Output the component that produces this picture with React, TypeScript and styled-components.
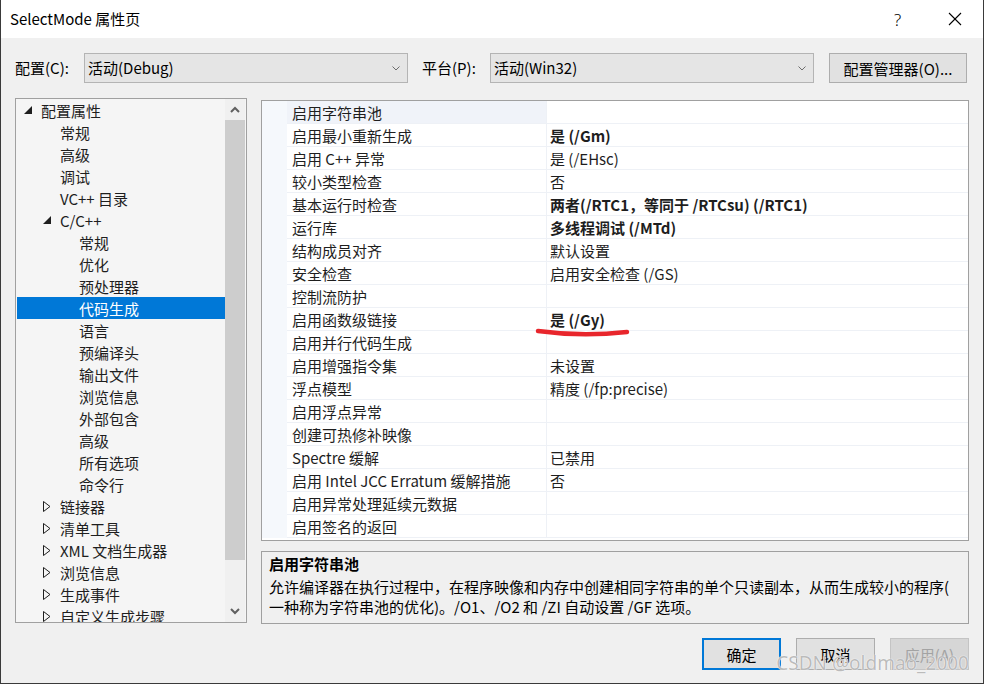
import React from 'react';
import styled, { createGlobalStyle } from 'styled-components';

const FONT = `"Noto Sans CJK SC", "Noto Sans", sans-serif`;

const GlobalStyle = createGlobalStyle`
  html, body { margin: 0; padding: 0; background: #f0f0f0; }
  body { font-family: ${FONT}; font-size: 15px; color: #000; }
  * { box-sizing: border-box; }
`;

const Window = styled.div`
  position: relative;
  width: 984px;
  height: 684px;
  background: #f0f0f0;
  border-left: 1px solid #3a3a3a;
  border-right: 1px solid #3a3a3a;
  border-bottom: 1px solid #3a3a3a;
  display: flex;
  flex-direction: column;
  overflow: hidden;
`;

const TitleBar = styled.div`
  height: 38px;
  flex: none;
  background: #ffffff;
  display: flex;
  align-items: center;
`;

const Title = styled.div`
  padding-left: 9px;
  font-size: 15px;
  line-height: 20px;
  flex: 1;
  color: #000;
`;

const CaptionButton = styled.div`
  width: 57px;
  height: 38px;
  display: flex;
  align-items: center;
  justify-content: center;
  font-family: "Noto Sans", sans-serif;
  font-size: 17px;
  font-weight: 300;
  color: #000;
`;

const Toolbar = styled.div`
  flex: none;
  display: flex;
  align-items: center;
  padding: 15px 0 0 14px;
  height: 45px;
`;

const Label = styled.div<{ $w: number; $ml?: number }>`
  width: ${(p) => p.$w}px;
  margin-left: ${(p) => p.$ml ?? 0}px;
  font-size: 15px;
  line-height: 30px;
  color: #000;
`;

const Combo = styled.div`
  width: 324px;
  height: 30px;
  background: #e5e5e5;
  border: 1px solid #b4b4b4;
  display: flex;
  align-items: center;
  padding: 0 7px 0 3px;
  font-size: 15px;
`;

const ComboText = styled.span`
  flex: 1;
  line-height: 28px;
`;

const PushButton = styled.div<{ $w: number; $h?: number; $ml?: number; $default?: boolean; $disabled?: boolean }>`
  width: ${(p) => p.$w}px;
  height: ${(p) => p.$h ?? 30}px;
  margin-left: ${(p) => p.$ml ?? 0}px;
  background: ${(p) => (p.$disabled ? '#d6d6d6' : '#e1e1e1')};
  border: ${(p) => (p.$default ? '2px solid #0078d7' : p.$disabled ? '1px solid #c4c4c4' : '1px solid #adadad')};
  color: ${(p) => (p.$disabled ? '#a3a3a3' : '#000')};
  display: flex;
  align-items: center;
  justify-content: center;
  font-size: 15px;
`;

const Main = styled.div`
  flex: none;
  display: flex;
  gap: 14px;
  padding-left: 14px;
  margin-top: 15px;
`;

const TreePanel = styled.div`
  width: 232px;
  height: 525px;
  border: 1px solid #a0a0a0;
  background: #f5f5f5;
  padding: 0 1px;
  display: flex;
`;

const TreeList = styled.div`
  flex: 1;
  overflow: hidden;
  display: flex;
  flex-direction: column;
`;

const TreeRow = styled.div<{ $level: number; $selected?: boolean }>`
  flex: none;
  height: 22px;
  display: flex;
  align-items: center;
  padding-left: ${(p) => 7 + p.$level * 19}px;
  background: ${(p) => (p.$selected ? '#0078d7' : 'transparent')};
  color: ${(p) => (p.$selected ? '#ffffff' : '#1e1e1e')};
  font-size: 15px;
  white-space: nowrap;
`;

const ExpSlot = styled.div`
  width: 17px;
  height: 22px;
  flex: none;
  display: flex;
  align-items: center;
`;

const ScrollBar = styled.div`
  width: 20px;
  flex: none;
  display: flex;
  flex-direction: column;
  background: #f0f0f0;
`;

const ScrollArrow = styled.div`
  height: 21px;
  flex: none;
  display: flex;
  align-items: center;
  justify-content: center;
`;

const ScrollThumb = styled.div`
  height: 440px;
  flex: none;
  background: #cdcdcd;
`;

const ScrollTrack = styled.div`
  flex: 1;
`;

const RightColumn = styled.div`
  width: 708px;
  display: flex;
  flex-direction: column;
  padding-top: 2px;
`;

const Grid = styled.div`
  height: 441px;
  border: 1px solid #a0a0a0;
  background: #ffffff;
  display: flex;
  flex-direction: column;
`;

const GridRow = styled.div`
  flex: none;
  height: 23px;
  display: flex;
`;

const Margin = styled.div`
  width: 25px;
  flex: none;
  background: #f5f8fc;
`;

const NameCell = styled.div<{ $active?: boolean }>`
  width: 260px;
  flex: none;
  padding-left: 5px;
  padding-top: 1px;
  background: ${(p) => (p.$active ? '#f0f3f9' : '#ffffff')};
  border-bottom: 1px solid #eef1f6;
  border-right: 1px solid #eef1f6;
  line-height: 21px;
  font-size: 15px;
  color: #1e1e1e;
  white-space: nowrap;
`;

const ValueCell = styled.div<{ $bold?: boolean }>`
  flex: 1;
  padding-left: 3px;
  padding-top: 1px;
  border-bottom: 1px solid #eef1f6;
  line-height: 21px;
  font-size: 15px;
  font-weight: ${(p) => (p.$bold ? 700 : 400)};
  color: #1e1e1e;
  white-space: nowrap;
`;

const Desc = styled.div`
  margin-top: 10px;
  height: 73px;
  border: 1px solid #a0a0a0;
  background: #f0f0f0;
  padding: 2px 7px 0 7px;
`;

const DescTitle = styled.div`
  font-weight: 700;
  font-size: 15px;
  line-height: 20px;
  margin-bottom: 3px;
  color: #000;
`;

const DescLine = styled.div`
  font-size: 15px;
  line-height: 20px;
  white-space: nowrap;
  color: #000;
`;

const Footer = styled.div`
  flex: none;
  display: flex;
  justify-content: flex-end;
  gap: 15px;
  padding-right: 14px;
  margin-top: 14px;
`;

const Watermark = styled.div`
  position: absolute;
  right: 14px;
  bottom: 7px;
  font-family: "Noto Sans", sans-serif;
  font-size: 19px;
  line-height: 26px;
  color: rgba(175, 175, 175, 0.85);
  text-shadow: 0 0 1px #ffffff, 0 0 1px #ffffff;
  pointer-events: none;
`;

const Annotation = styled.svg`
  position: absolute;
  left: 532px;
  top: 325px;
  pointer-events: none;
`;

type TreeItem = { label: string; level: number; exp?: 'open' | 'closed'; selected?: boolean };

const tree: TreeItem[] = [
  { label: '配置属性', level: 0, exp: 'open' },
  { label: '常规', level: 1 },
  { label: '高级', level: 1 },
  { label: '调试', level: 1 },
  { label: 'VC++ 目录', level: 1 },
  { label: 'C/C++', level: 1, exp: 'open' },
  { label: '常规', level: 2 },
  { label: '优化', level: 2 },
  { label: '预处理器', level: 2 },
  { label: '代码生成', level: 2, selected: true },
  { label: '语言', level: 2 },
  { label: '预编译头', level: 2 },
  { label: '输出文件', level: 2 },
  { label: '浏览信息', level: 2 },
  { label: '外部包含', level: 2 },
  { label: '高级', level: 2 },
  { label: '所有选项', level: 2 },
  { label: '命令行', level: 2 },
  { label: '链接器', level: 1, exp: 'closed' },
  { label: '清单工具', level: 1, exp: 'closed' },
  { label: 'XML 文档生成器', level: 1, exp: 'closed' },
  { label: '浏览信息', level: 1, exp: 'closed' },
  { label: '生成事件', level: 1, exp: 'closed' },
  { label: '自定义生成步骤', level: 1, exp: 'closed' },
];

type Prop = { name: string; value?: string; bold?: boolean };

const props: Prop[] = [
  { name: '启用字符串池' },
  { name: '启用最小重新生成', value: '是 (/Gm)', bold: true },
  { name: '启用 C++ 异常', value: '是 (/EHsc)' },
  { name: '较小类型检查', value: '否' },
  { name: '基本运行时检查', value: '两者(/RTC1，等同于 /RTCsu) (/RTC1)', bold: true },
  { name: '运行库', value: '多线程调试 (/MTd)', bold: true },
  { name: '结构成员对齐', value: '默认设置' },
  { name: '安全检查', value: '启用安全检查 (/GS)' },
  { name: '控制流防护' },
  { name: '启用函数级链接', value: '是 (/Gy)', bold: true },
  { name: '启用并行代码生成' },
  { name: '启用增强指令集', value: '未设置' },
  { name: '浮点模型', value: '精度 (/fp:precise)' },
  { name: '启用浮点异常' },
  { name: '创建可热修补映像' },
  { name: 'Spectre 缓解', value: '已禁用' },
  { name: '启用 Intel JCC Erratum 缓解措施', value: '否' },
  { name: '启用异常处理延续元数据' },
  { name: '启用签名的返回' },
];

const Chevron = () => (
  <svg width="8" height="5" viewBox="0 0 8 5">
    <polyline points="0.5,0.5 4,4 7.5,0.5" fill="none" stroke="#6d6d6d" strokeWidth="1" />
  </svg>
);

const Expander = ({ kind }: { kind?: 'open' | 'closed' }) => {
  if (kind === 'open')
    return (
      <svg width="8" height="8" viewBox="0 0 8 8">
        <polygon points="8,0 8,8 0,8" fill="#1e1e1e" />
      </svg>
    );
  if (kind === 'closed')
    return (
      <svg width="8" height="11" viewBox="0 0 8 11">
        <polygon points="0.5,0.5 7,5.5 0.5,10.5" fill="none" stroke="#1e1e1e" strokeWidth="1" />
      </svg>
    );
  return null;
};

const ArrowIcon = ({ up }: { up?: boolean }) => (
  <svg width="10" height="7" viewBox="0 0 10 7">
    <polyline
      points={up ? '1,6 5,2 9,6' : '1,1 5,5 9,1'}
      fill="none"
      stroke="#606060"
      strokeWidth="2"
    />
  </svg>
);

export default function App() {
  return (
    <>
      <GlobalStyle />
      <Window>
        <TitleBar>
          <Title>SelectMode 属性页</Title>
          <CaptionButton>?</CaptionButton>
          <CaptionButton>
            <svg width="14" height="14" viewBox="0 0 14 14">
              <line x1="1" y1="1" x2="13" y2="13" stroke="#000" strokeWidth="1.1" />
              <line x1="13" y1="1" x2="1" y2="13" stroke="#000" strokeWidth="1.1" />
            </svg>
          </CaptionButton>
        </TitleBar>

        <Toolbar>
          <Label $w={69}>配置(C):</Label>
          <Combo>
            <ComboText>活动(Debug)</ComboText>
            <Chevron />
          </Combo>
          <Label $w={68} $ml={14}>平台(P):</Label>
          <Combo>
            <ComboText>活动(Win32)</ComboText>
            <Chevron />
          </Combo>
          <PushButton $w={138} $ml={15}>配置管理器(O)...</PushButton>
        </Toolbar>

        <Main>
          <TreePanel>
            <TreeList>
              {tree.map((t, i) => (
                <TreeRow key={i} $level={t.level} $selected={t.selected}>
                  <ExpSlot>
                    <Expander kind={t.exp} />
                  </ExpSlot>
                  {t.label}
                </TreeRow>
              ))}
            </TreeList>
            <ScrollBar>
              <ScrollArrow>
                <ArrowIcon up />
              </ScrollArrow>
              <ScrollThumb />
              <ScrollTrack />
              <ScrollArrow>
                <ArrowIcon />
              </ScrollArrow>
            </ScrollBar>
          </TreePanel>

          <RightColumn>
            <Grid>
              {props.map((p, i) => (
                <GridRow key={i}>
                  <Margin />
                  <NameCell $active={i === 0}>{p.name}</NameCell>
                  <ValueCell $bold={p.bold}>{p.value ?? ''}</ValueCell>
                </GridRow>
              ))}
            </Grid>
            <Desc>
              <DescTitle>启用字符串池</DescTitle>
              <DescLine>允许编译器在执行过程中，在程序映像和内存中创建相同字符串的单个只读副本，从而生成较小的程序(</DescLine>
              <DescLine>一种称为字符串池的优化)。/O1、/O2 和 /ZI 自动设置 /GF 选项。</DescLine>
            </Desc>
          </RightColumn>
        </Main>

        <Footer>
          <PushButton $w={79} $h={32} $default>确定</PushButton>
          <PushButton $w={79} $h={32}>取消</PushButton>
          <PushButton $w={79} $h={32} $disabled>应用(A)</PushButton>
        </Footer>

        <Annotation width="100" height="16" viewBox="0 0 100 16">
          <path d="M5 6 Q 48 12 94 7" fill="none" stroke="#e8262c" strokeWidth="4.5" strokeLinecap="round" />
        </Annotation>
        <Watermark>CSDN @oldmao_2000</Watermark>
      </Window>
    </>
  );
}
